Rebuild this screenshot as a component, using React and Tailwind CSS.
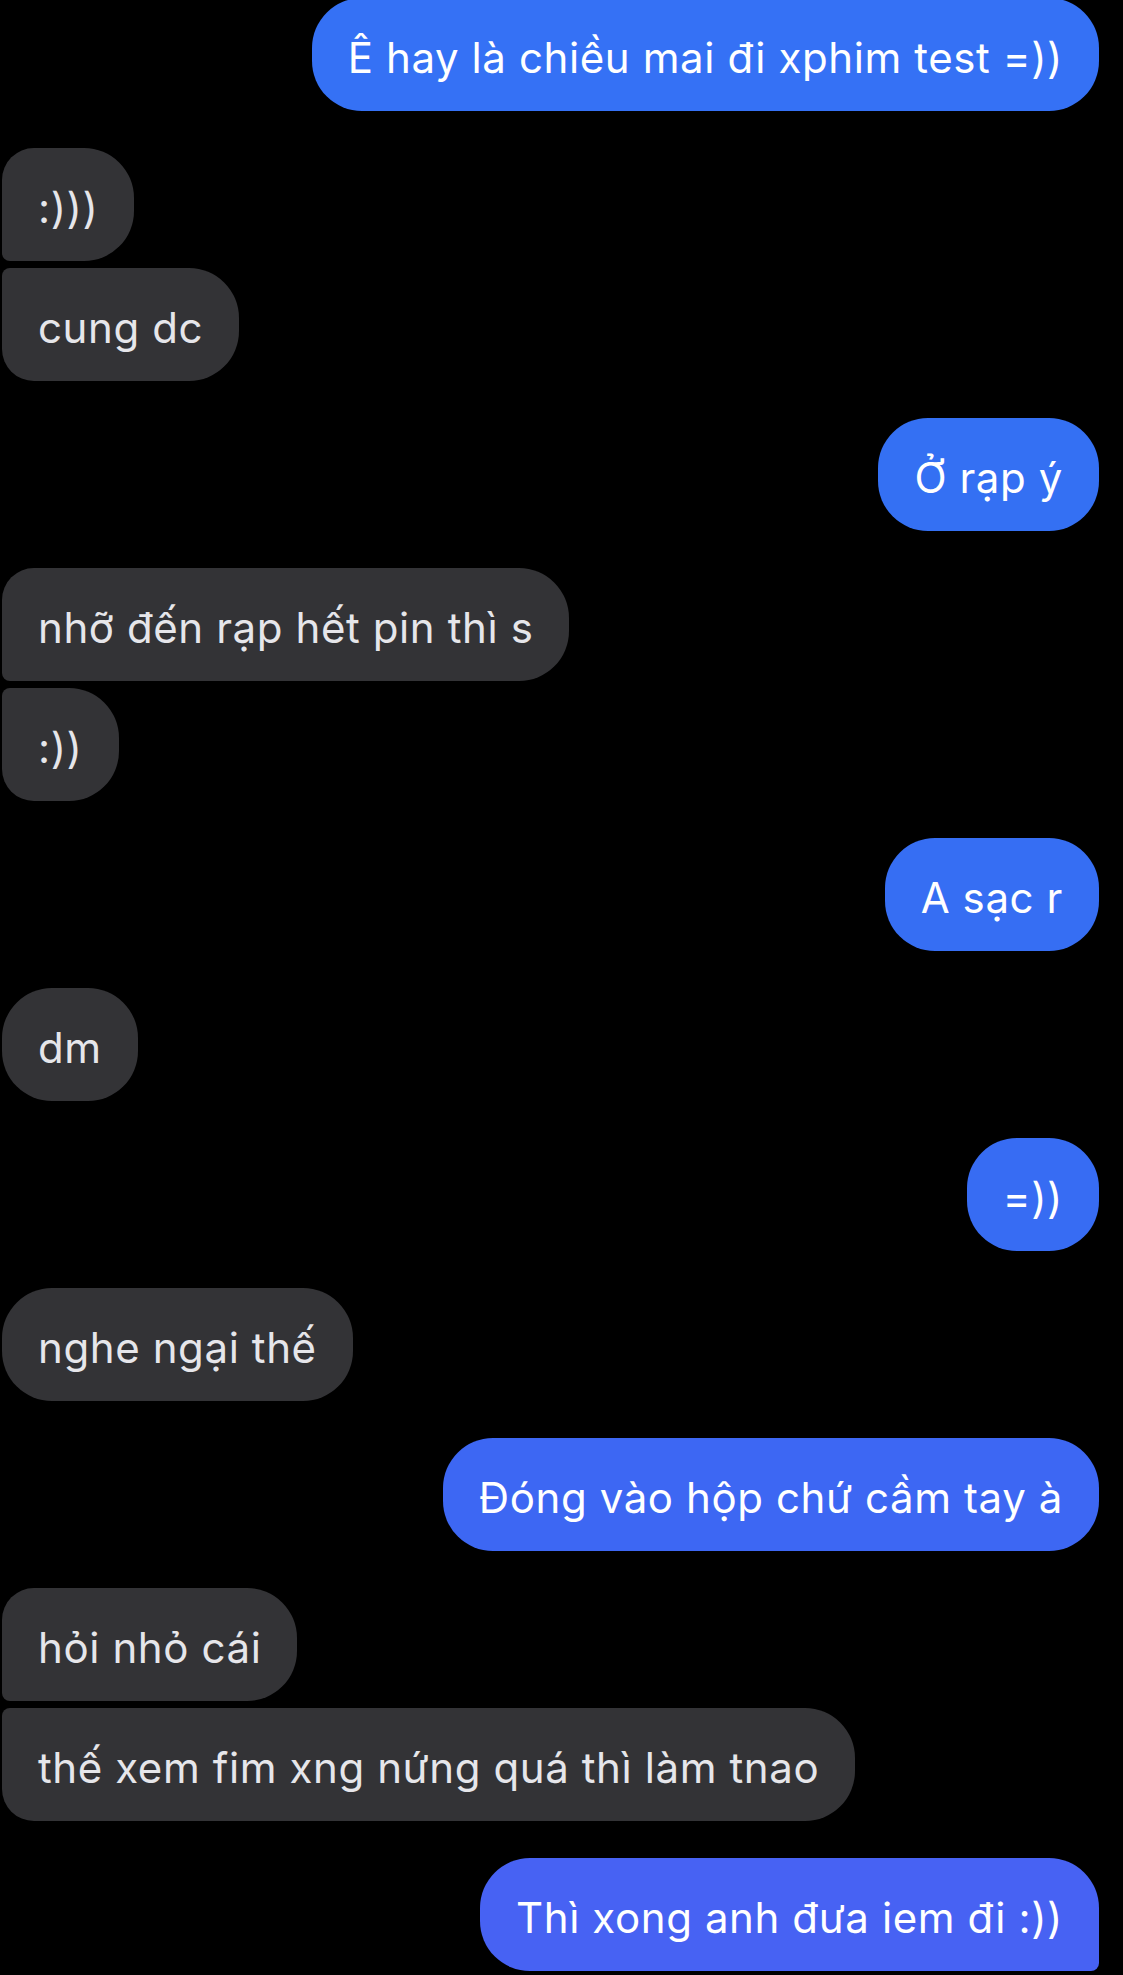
const messages = [
  { side: 'me', text: 'Ê hay là chiều mai đi xphim test =))', bg: 'bg-[#3571f5]' },
  { side: 'them', text: ':)))', pos: 'first' },
  { side: 'them', text: 'cung dc', pos: 'last' },
  { side: 'me', text: 'Ở rạp ý', bg: 'bg-[#3470f3]' },
  { side: 'them', text: 'nhỡ đến rạp hết pin thì s', pos: 'first' },
  { side: 'them', text: ':))', pos: 'last' },
  { side: 'me', text: 'A sạc r', bg: 'bg-[#366ef3]' },
  { side: 'them', text: 'dm' },
  { side: 'me', text: '=))', bg: 'bg-[#376cf3]' },
  { side: 'them', text: 'nghe ngại thế' },
  { side: 'me', text: 'Đóng vào hộp chứ cầm tay à', bg: 'bg-[#3d67f3]' },
  { side: 'them', text: 'hỏi nhỏ cái', pos: 'first' },
  { side: 'them', text: 'thế xem fim xng nứng quá thì làm tnao', pos: 'last' },
  { side: 'me', text: 'Thì xong anh đưa iem đi :))', bg: 'bg-[#4762f3]', tail: true },
];

function Bubble({ msg }) {
  const isMe = msg.side === 'me';

  // grouped bubbles get a tighter corner where they touch
  let corners = 'rounded-[50px]';
  if (msg.pos === 'first') corners = 'rounded-r-[50px] rounded-tl-[32px] rounded-bl-[8px]';
  if (msg.pos === 'last') corners = 'rounded-r-[50px] rounded-tl-[8px] rounded-bl-[32px]';
  if (msg.tail) corners = 'rounded-l-[50px] rounded-tr-[50px] rounded-br-[8px]';

  return (
    <div className={`flex ${isMe ? 'justify-end pr-[24px]' : 'justify-start pl-[2px]'}`}>
      <div
        className={`h-[113px] flex items-center px-[36px] pt-[6px] whitespace-nowrap text-[42px] tracking-[0.6px] ${corners} ${
          isMe ? `${msg.bg} text-white` : 'bg-[#333336] text-[#e6e6ea]'
        }`}
      >
        {msg.text}
      </div>
    </div>
  );
}

export default function App() {
  return (
    <div
      className="w-[1123px] h-[1975px] bg-black overflow-hidden flex flex-col"
      style={{ fontFamily: 'Inter, "Noto Sans", sans-serif' }}
    >
      {messages.map((msg, i) => {
        const prev = messages[i - 1];
        const grouped = prev && prev.side === msg.side && msg.pos === 'last';
        const gap = i === 0 ? '-mt-[2px]' : grouped ? 'mt-[7px]' : 'mt-[37px]';
        return (
          <div key={i} className={gap}>
            <Bubble msg={msg} />
          </div>
        );
      })}
    </div>
  );
}
